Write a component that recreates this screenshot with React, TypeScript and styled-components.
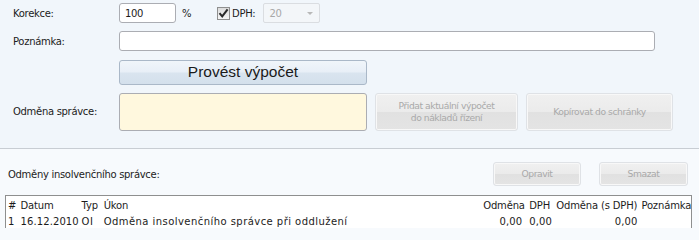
import React from "react";
import styled, { createGlobalStyle } from "styled-components";

const Global = createGlobalStyle`
  html, body { margin: 0; padding: 0; }
  body {
    background: #f7fafd;
    font-family: "DejaVu Sans", "Liberation Sans", sans-serif;
    font-size: 10px;
    letter-spacing: -0.3px;
    color: #1c1c1c;
    width: 699px;
    height: 228px;
    overflow: hidden;
  }
`;

const Page = styled.div`
  display: flex;
  flex-direction: column;
`;

const TopPanel = styled.div`
  background: #f1f6fb;
  border-bottom: 1px solid #c8cdd3;
  padding: 3px 0 18px 13px;
  display: grid;
  grid-template-columns: 106px auto;
  grid-template-rows: 20px 20px 25px 38px;
  row-gap: 8px;
  align-items: center;
  justify-content: start;
`;

const Label = styled.div`
  white-space: nowrap;
`;

const Inline = styled.div<{ $mt?: number }>`
  display: flex;
  align-items: center;
  height: 100%;
  margin-top: ${(p) => p.$mt ?? 0}px;
`;

const TextBox = styled.div<{ $w: number; $h?: number; $bg?: string }>`
  box-sizing: border-box;
  width: ${(p) => p.$w}px;
  height: ${(p) => p.$h ?? 20}px;
  background: ${(p) => p.$bg ?? "#ffffff"};
  border: 1px solid #abadb3;
  border-radius: 3px;
  padding: 0 5px;
  display: flex;
  align-items: center;
  font-size: 10px;
  color: #1c1c1c;
`;

const Unit = styled.span`
  margin-left: 6px;
  width: 35px;
`;

const CheckBox = styled.span`
  box-sizing: border-box;
  width: 13px;
  height: 13px;
  border: 1px solid #8f8f8f;
  background: linear-gradient(#dcdcdc, #f6f6f6);
  display: inline-flex;
  align-items: center;
  justify-content: center;
`;

const CheckLabel = styled.span`
  margin-left: 2px;
  margin-right: 8px;
`;

const Select = styled.div`
  box-sizing: border-box;
  width: 57px;
  height: 20px;
  border: 1px solid #dadde1;
  border-radius: 2px;
  background: #f3f6f9;
  color: #a8a8a8;
  display: flex;
  align-items: center;
  justify-content: space-between;
  padding: 0 6px 0 5px;
`;

const Arrow = styled.span`
  width: 0;
  height: 0;
  border-left: 3px solid transparent;
  border-right: 3px solid transparent;
  border-top: 3px solid #b8b8b8;
`;

const MainButton = styled.div`
  box-sizing: border-box;
  width: 248px;
  height: 25px;
  border: 1px solid #aab8c8;
  border-radius: 3px;
  background: linear-gradient(#f0f5fa 0%, #e8eff7 48%, #d9e4ef 52%, #d4e0ec 100%);
  font-family: "Liberation Sans", Arial, sans-serif;
  font-size: 15.5px;
  letter-spacing: 0;
  color: #1a1a1a;
  display: flex;
  align-items: center;
  justify-content: center;
`;

const ResultRow = styled.div`
  display: flex;
  align-items: center;
  gap: 8px;
  margin-top: 1px;
`;

const GhostButton = styled.div<{ $w: number; $h: number }>`
  box-sizing: border-box;
  width: ${(p) => p.$w}px;
  height: ${(p) => p.$h}px;
  border: 1px solid #dfe2e6;
  border-radius: 3px;
  box-shadow: inset 0 0 0 1px #f8f8f8;
  background: linear-gradient(#f0f0f0 0%, #ebebeb 50%, #e1e1e1 51%, #e4e4e4 100%);
  color: #a9a9a9;
  font-size: 9.2px;
  letter-spacing: -0.45px;
  text-align: center;
  line-height: 12px;
  display: flex;
  align-items: center;
  justify-content: center;
`;

const LowerPanel = styled.div`
  padding: 13px 7px 0 5px;
  display: flex;
  flex-direction: column;
`;

const Toolbar = styled.div`
  display: flex;
  align-items: center;
  padding: 0 4px 0 3px;
  gap: 18px;
`;

const ToolbarTitle = styled.div`
  flex: 1;
`;

const Grid = styled.table`
  margin-top: 9px;
  border-collapse: collapse;
  table-layout: fixed;
  width: 687px;
  background: #ffffff;
  border: 1px solid #8e8f8f;
`;

const Cell = styled.td<{ $w?: number; $align?: string; $pr?: number; $ls?: number }>`
  box-sizing: border-box;
  ${(p) => (p.$w ? `width: ${p.$w}px;` : "")}
  padding: 0 ${(p) => p.$pr ?? 0}px 0 2px;
  text-align: ${(p) => p.$align ?? "left"};
  white-space: nowrap;
  height: 17px;
  font-size: 10px;
  letter-spacing: ${(p) => p.$ls ?? 0.45}px;
  color: #1c1c1c;
`;

const HeadCell = styled(Cell).attrs({ as: "th" })`
  font-weight: normal;
  letter-spacing: -0.15px;
  overflow: hidden;
  height: 18px;
  padding-top: 1px;
`;

const cols = [
  { t: "#", w: 13 },
  { t: "Datum", w: 61 },
  { t: "Typ", w: 22 },
  { t: "Úkon", w: 379 },
  { t: "Odměna", w: 46 },
  { t: "DPH", w: 27 },
  { t: "Odměna (s DPH)", w: 85 },
  { t: "Poznámka", w: 52 },
];

const row: { v: string; a?: string; pr?: number; ls?: number }[] = [
  { v: "1" },
  { v: "16.12.2010", ls: 0.1 },
  { v: "OI" },
  { v: "Odměna insolvenčního správce při oddlužení" },
  { v: "0,00", a: "right", pr: 5, ls: 0.1 },
  { v: "0,00", ls: 0.1 },
  { v: "0,00", a: "right", pr: 2, ls: 0.1 },
  { v: "" },
];

const Check = () => (
  <svg width="11" height="11" viewBox="0 0 11 11">
    <path d="M1.5 5.2 L4.2 8.4 L9.6 1.4" fill="none" stroke="#2a2a2a" strokeWidth="2" />
  </svg>
);

export default function App() {
  return (
    <Page>
      <Global />
      <TopPanel>
        <Label>Korekce:</Label>
        <Inline>
          <TextBox $w={57}>100</TextBox>
          <Unit>%</Unit>
          <CheckBox>
            <Check />
          </CheckBox>
          <CheckLabel>DPH:</CheckLabel>
          <Select>
            <span>20</span>
            <Arrow />
          </Select>
        </Inline>
        <Label>Poznámka:</Label>
        <Inline>
          <TextBox $w={536} />
        </Inline>
        <span />
        <Inline $mt={1}>
          <MainButton>Provést výpočet</MainButton>
        </Inline>
        <Label>Odměna správce:</Label>
        <ResultRow>
          <TextBox $w={248} $h={38} $bg="#fff8de" />
          <GhostButton $w={143} $h={38}>
            Přidat aktuální výpočet
            <br />
            do nákladů řízení
          </GhostButton>
          <GhostButton $w={147} $h={38}>
            Kopírovat do schránky
          </GhostButton>
        </ResultRow>
      </TopPanel>
      <LowerPanel>
        <Toolbar>
          <ToolbarTitle>Odměny insolvenčního správce:</ToolbarTitle>
          <GhostButton $w={88} $h={24}>
            Opravit
          </GhostButton>
          <GhostButton $w={89} $h={24}>
            Smazat
          </GhostButton>
        </Toolbar>
        <Grid>
          <thead>
            <tr>
              {cols.map((c) => (
                <HeadCell key={c.t} $w={c.w}>
                  {c.t}
                </HeadCell>
              ))}
            </tr>
          </thead>
          <tbody>
            <tr>
              {row.map((c, i) => (
                <Cell key={i} $align={c.a} $pr={c.pr} $ls={c.ls}>
                  {c.v}
                </Cell>
              ))}
            </tr>
          </tbody>
        </Grid>
      </LowerPanel>
    </Page>
  );
}
